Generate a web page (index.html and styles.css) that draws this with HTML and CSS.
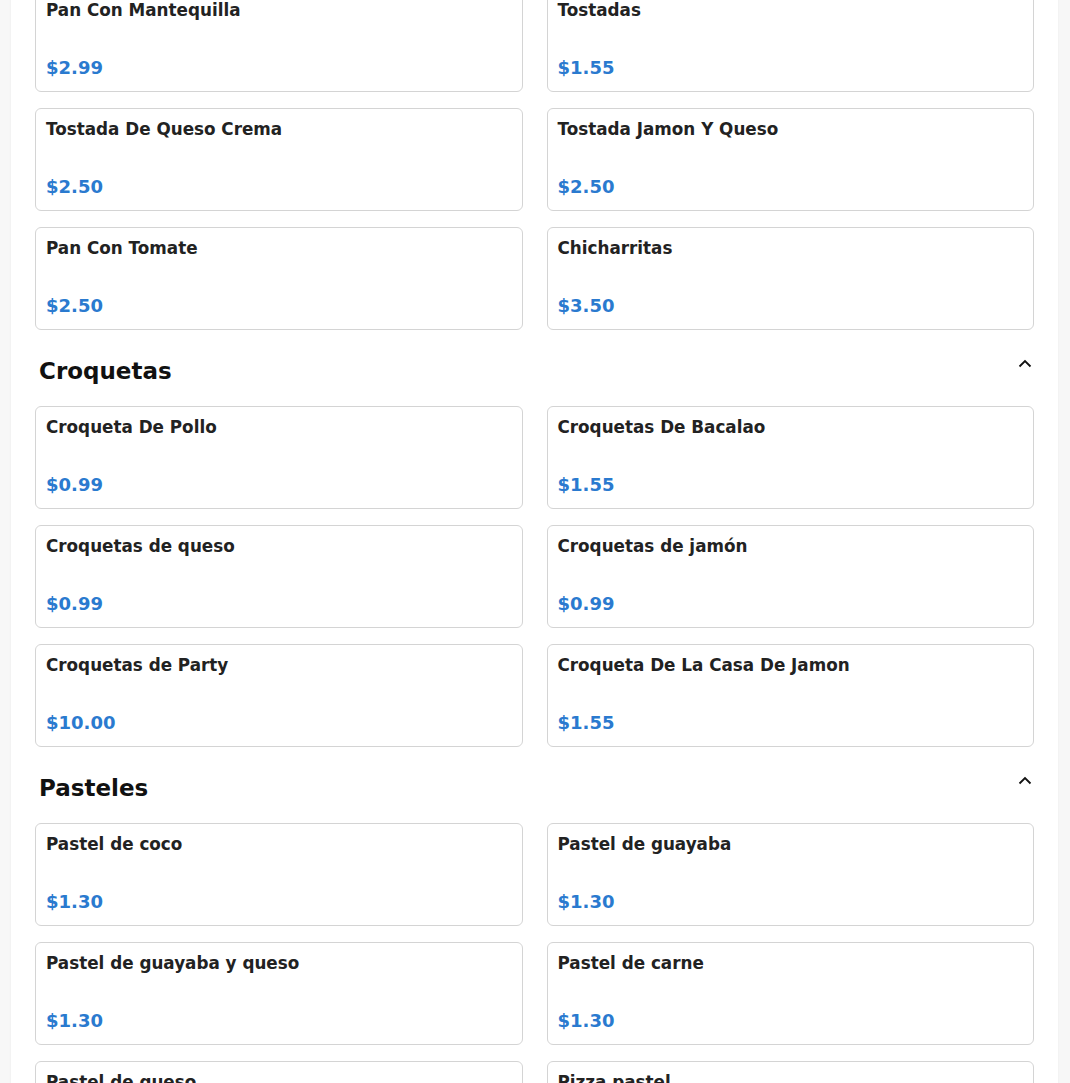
FILE: index.html
```html
<!DOCTYPE html>
<html lang="es">
<head>
<meta charset="utf-8">
<title>Menú</title>
<link rel="stylesheet" href="styles.css">
</head>
<body>
<main class="panel">
  <section class="section">
    <div class="grid">
      <div class="card"><div class="name">Pan Con Mantequilla</div><div class="price">$2.99</div></div>
      <div class="card"><div class="name">Tostadas</div><div class="price">$1.55</div></div>
      <div class="card"><div class="name">Tostada De Queso Crema</div><div class="price">$2.50</div></div>
      <div class="card"><div class="name">Tostada Jamon Y Queso</div><div class="price">$2.50</div></div>
      <div class="card"><div class="name">Pan Con Tomate</div><div class="price">$2.50</div></div>
      <div class="card"><div class="name">Chicharritas</div><div class="price">$3.50</div></div>
    </div>
  </section>
  <section class="section">
    <div class="section-head">
      <h2 class="section-title">Croquetas</h2>
      <svg class="chevron" width="16" height="16" viewBox="0 0 16 16"><path d="M2.5 10.5 L8 5 L13.5 10.5" fill="none" stroke="#111" stroke-width="1.8"/></svg>
    </div>
    <div class="grid">
      <div class="card"><div class="name">Croqueta De Pollo</div><div class="price">$0.99</div></div>
      <div class="card"><div class="name">Croquetas De Bacalao</div><div class="price">$1.55</div></div>
      <div class="card"><div class="name">Croquetas de queso</div><div class="price">$0.99</div></div>
      <div class="card"><div class="name">Croquetas de jamón</div><div class="price">$0.99</div></div>
      <div class="card"><div class="name">Croquetas de Party</div><div class="price">$10.00</div></div>
      <div class="card"><div class="name">Croqueta De La Casa De Jamon</div><div class="price">$1.55</div></div>
    </div>
  </section>
  <section class="section">
    <div class="section-head">
      <h2 class="section-title">Pasteles</h2>
      <svg class="chevron" width="16" height="16" viewBox="0 0 16 16"><path d="M2.5 10.5 L8 5 L13.5 10.5" fill="none" stroke="#111" stroke-width="1.8"/></svg>
    </div>
    <div class="grid">
      <div class="card"><div class="name">Pastel de coco</div><div class="price">$1.30</div></div>
      <div class="card"><div class="name">Pastel de guayaba</div><div class="price">$1.30</div></div>
      <div class="card"><div class="name">Pastel de guayaba y queso</div><div class="price">$1.30</div></div>
      <div class="card"><div class="name">Pastel de carne</div><div class="price">$1.30</div></div>
      <div class="card"><div class="name">Pastel de queso</div><div class="price">$1.30</div></div>
      <div class="card"><div class="name">Pizza pastel</div><div class="price">$1.30</div></div>
    </div>
  </section>
</main>
</body>
</html>
```

FILE: styles.css
```css
html, body {
  margin: 0;
  padding: 0;
  background: #f7f7f7;
  font-family: "DejaVu Sans", "Liberation Sans", sans-serif;
  overflow: hidden;
}

.panel {
  margin: -11px 12px 0 11px;
  padding: 0 24px 24px;
  background: #ffffff;
  box-shadow: 0 0 2px rgba(0, 0, 0, 0.06);
  min-height: 1200px;
}

.section-head {
  display: flex;
  justify-content: space-between;
  align-items: flex-start;
  margin: 28px 0 21px;
  padding-left: 4px;
}

.section-title {
  margin: 0;
  font-size: 23px;
  line-height: 27px;
  font-weight: bold;
  color: #111;
}

.chevron {
  display: block;
  margin-top: -2px;
  margin-right: 1px;
}

.grid {
  display: grid;
  grid-template-columns: 1fr 1fr;
  column-gap: 24px;
  row-gap: 16px;
}

.card {
  border: 1px solid #d4d4d4;
  border-radius: 6px;
  padding: 10px 10px 13px;
  background: #fff;
}

.name {
  font-size: 16.8px;
  line-height: 20px;
  font-weight: bold;
  color: #222;
}

.price {
  margin-top: 37px;
  font-size: 18px;
  line-height: 21px;
  font-weight: bold;
  color: #2a7acf;
}
```
